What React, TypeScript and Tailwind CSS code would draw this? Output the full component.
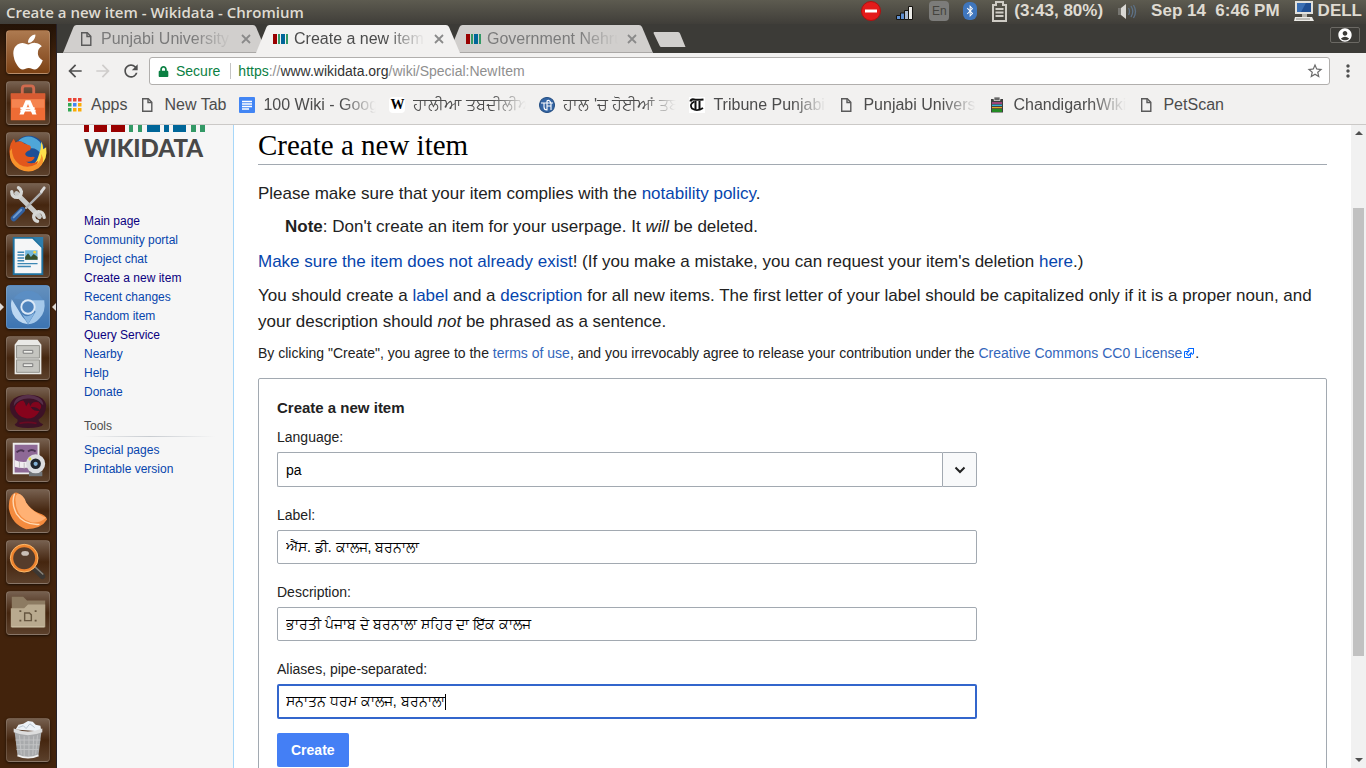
import { useState, type ReactNode } from "react";
import { FaApple, FaBluetoothB, FaLock } from "react-icons/fa";
import { MdAccountCircle, MdArrowBack, MdArrowForward, MdMoreVert, MdRefresh, MdStarBorder } from "react-icons/md";

const FADE = "[mask-image:linear-gradient(to_right,black_70%,transparent)]";

function PageIcon() {
  return (
    <svg viewBox="0 0 16 16" className="size-4 shrink-0" fill="none" stroke="#5a5a5a" strokeWidth="1.4">
      <path d="M2.7 1.7h5.6l3.5 3.500v9.100H2.700z" />
      <path d="M8 1.900v3.600h3.600" />
    </svg>
  );
}

function WikidataIcon() {
  return (
    <svg viewBox="0 0 16 16" className="size-4 shrink-0">
      <path d="M1 3h4v10H1z" fill="#990000" />
      <path d="M6 3h2v10H6zM14 3h2v10h-2z" fill="#339966" />
      <path d="M9 3h4v10H9z" fill="#006699" />
    </svg>
  );
}

interface TabProps {
  title: string;
  icon: ReactNode;
  active?: boolean;
}

function BrowserTab({ title, icon, active }: TabProps) {
  return (
    <div className={`relative -mr-[11px] h-7 w-[204px] ${active ? "z-10" : ""}`}>
      <svg viewBox="0 0 204 28" preserveAspectRatio="none" className="absolute inset-0 size-full">
        <path
          d="M0 28 L10.5 2 Q11.5 0 13.5 0 H190 Q192 0 193 2 L204 28 Z"
          fill={active ? "#f2f1f0" : "#d1cfcd"}
        />
        {!active && <path d="M0 27.5 H204" stroke="#aaa8a6" />}
      </svg>
      <div className="relative flex h-full items-center pl-4">
        <button
          role="tab"
          aria-selected={!!active}
          className={`flex items-center gap-[6px] text-base ${active ? "text-[#4c4c4c]" : "text-[#7b7b7b]"}`}
        >
          {icon}
          <span className={`w-[131px] overflow-hidden text-left whitespace-nowrap ${FADE}`}>{title}</span>
        </button>
        <button aria-label={`Close ${title}`} className="ml-2">
          <svg viewBox="0 0 12 12" className="size-3" stroke="#8a8a8a" strokeWidth="1.8">
            <path d="M2 2l8 8M10 2l-8 8" />
          </svg>
        </button>
      </div>
    </div>
  );
}

function TopBar() {
  return (
    <header className="flex h-6 shrink-0 items-center justify-between bg-linear-to-b from-[#5d5b50] to-[#403e39] pr-1 pl-[6px] text-[#dfdbd2]">
      <span className="font-['Open_Sans',sans-serif] text-[15px] leading-5 font-semibold whitespace-nowrap">
        Create a new item - Wikidata - Chromium
      </span>
      <div className="flex items-center gap-[14px] pb-[2px] text-[17px] leading-5 font-bold whitespace-nowrap">
        <svg viewBox="0 0 20 20" className="size-5">
          <circle cx="10" cy="10" r="9.5" fill="#e31b1b" stroke="#b01010" />
          <path d="M4 8.5h12v3H4z" fill="#fff" />
        </svg>
        <svg viewBox="0 0 20 20" className="size-5" stroke="#15130f">
          <path d="M1.500 14.500h4v4h-4zM5.500 12h4v6.500h-4z" fill="#5f8fd0" />
          <path d="M9.500 9.500h4v9h-4z" fill="#a9b9cf" />
          <path d="M13.500 5.500h4v13h-4z" fill="#ecece8" />
        </svg>
        <span className="flex h-5 w-5 items-center justify-center rounded-sm bg-[#7c7c7a] text-xs font-normal text-[#45443f]">
          En
        </span>
        <span className="flex h-[18px] w-[14px] items-center justify-center rounded-md bg-[#3f76bd] text-white">
          <FaBluetoothB size={12} />
        </span>
        <span className="flex items-center gap-[6px]">
          <svg viewBox="0 0 17 22" className="h-[22px] w-[17px]" fill="none" stroke="#cfccc5" strokeWidth="2">
            <path d="M2 5h3V2h7v3h3v16H2z" />
            <path d="M4.500 9h8M4.500 12.500h8M4.500 16h8" />
          </svg>
          (3:43, 80%)
        </span>
        <svg viewBox="0 0 20 20" className="size-5">
          <path d="M1 7h3v7H1z" fill="#777671" />
          <path d="M4 7l5-4v15l-5-4z" fill="#d9d8d4" />
          <path d="M11.500 7q2 3.500 0 7M14 5q3.500 5.500 0 11M16.500 4q4 6.500 0 13" fill="none" stroke="#5d7186" strokeWidth="1.300" />
        </svg>
        <span className="whitespace-pre">Sep 14  6:46 PM</span>
        <span className="flex items-center gap-1">
          <svg viewBox="0 0 20 22" className="h-[22px] w-5">
            <path d="M1 1h18v13H1z" fill="#e2e1dc" />
            <path d="M3 3h14v9H3z" fill="#1f4f94" />
            <path d="M3 3h9l-5 9H3z" fill="#3a6fb4" />
            <path d="M8 14h5v3H8z" fill="#b5b4ae" />
            <path d="M1 17h17l2 4H0z" fill="#ecebe7" />
            <path d="M2 19h14" stroke="#8f8e88" />
          </svg>
          DELL
        </span>
      </div>
    </header>
  );
}

const dockIcons: { name: string; tile?: string; icon: ReactNode }[] = [
  {
    name: "Dash",
    tile: "from-[#ad7a50] to-[#7d4213]",
    icon: <FaApple size={40} color="#fff" className="mx-auto" />,
  },
  {
    name: "Software",
    icon: (
      <svg viewBox="0 0 44 44">
        <path d="M16 14V7q0-3 3-3h6q3 0 3 3v7" fill="none" stroke="#d06a4d" strokeWidth="3" />
        <path d="M4 12h36v28H4z" fill="#ee6c35" />
        <path d="M4 12h36v6H4z" fill="#d65b32" />
        <path d="M5 18h34v9H5z" fill="#f58450" />
        <path d="M19.500 19h5L31 34h-4.500L22 23l-4.500 11H13z" fill="#fff" />
        <path d="M14 27.500h15M14 30h16" stroke="#fff" strokeWidth="2" />
      </svg>
    ),
  },
  {
    name: "Firefox",
    icon: (
      <svg viewBox="0 0 44 44">
        <circle cx="23" cy="20" r="17" fill="#1d4f96" />
        <path d="M12 8Q23-1 34 9Q39 15 35 21Q30 15 25 16Q20 10 12 8" fill="#4fa6d8" />
        <path d="M36 9Q38 13 38 17L41 15Q43 27 35 34Q28 41 18 39Q31 34 33 24Q36 17 36 9" fill="#ffdf4a" />
        <path d="M4 11L7 6L9 10Q14 7 18 11L24 13Q26 15 24 18Q20 19 19 22Q20 26 27 25Q29 25 29 26Q26 31 20 30Q26 34 33 29Q30 38 20 39Q8 38 4 28Q1 19 4 11" fill="#e2571c" />
        <path d="M5 16Q5 27 13 33Q22 38 32 32Q36 28 36 22Q41 31 33 37Q24 43 13 38Q2 31 3 19Z" fill="#f6932c" />
      </svg>
    ),
  },
  {
    name: "Settings",
    icon: (
      <svg viewBox="0 0 44 44" strokeLinecap="round">
        <path d="M10 10L34 34" stroke="#c9cac8" strokeWidth="5" />
        <path d="M5 8q0 6 6 6q4-1 4-6q-1-3-3-4M39 35q-1-6-6-6q-5 1-5 6q1 4 4 4" fill="none" stroke="#d6d7d5" strokeWidth="3.500" />
        <path d="M20 25L36 9" stroke="#aeb0b2" strokeWidth="2.500" />
        <path d="M36 8l3-4" stroke="#dadada" strokeWidth="3" />
        <path d="M7 36l9-9" stroke="#315f9f" strokeWidth="6" />
        <path d="M7 35l8-8" stroke="#6f9bd0" strokeWidth="2" />
      </svg>
    ),
  },
  {
    name: "Writer",
    icon: (
      <svg viewBox="0 0 44 44">
        <path d="M7 3h20l10 10v28H7z" fill="#f5f6f7" stroke="#1e719f" strokeWidth="2" />
        <path d="M27 2h11v12z" fill="#2e7dab" />
        <path d="M11 18h7M11 21h7M11 24h7M11 27h7M11 30h21M11 33h14" stroke="#3d88b5" strokeWidth="1.500" />
        <path d="M19 16h13v10H19z" fill="#72b8dc" />
        <path d="M19 26v-3l3-4 3 4 3-3 4 3v3z" fill="#38512c" />
        <circle cx="29" cy="18" r="1.500" fill="#f5d548" />
      </svg>
    ),
  },
  {
    name: "Chromium",
    tile: "from-[#6490bd] to-[#3c74b2]",
    icon: (
      <svg viewBox="0 0 44 44">
        <path d="M7 13Q13 5 22 5Q33 5 38 15H22z" fill="#5b8ec4" />
        <path d="M5 14L16 32Q20 36 22 40Q11 39 6 29Q3 21 5 14" fill="#bdd8f2" />
        <path d="M22 15h17Q41 27 34 34Q29 40 22 40L30 27z" fill="#a4c8ea" />
        <path d="M15 28Q18 33 24 31L29 28L22 40Q20 36 15 28" fill="#86b4e0" />
        <circle cx="22" cy="22" r="8" fill="#dce9f7" />
        <circle cx="22" cy="22" r="6" fill="#4e83bd" />
      </svg>
    ),
  },
  {
    name: "Files",
    icon: (
      <svg viewBox="0 0 44 44">
        <path d="M12 3h20l4 5v31H8V8z" fill="#e9e9e6" />
        <path d="M10 9h24v13H10zM10 24h24v13H10z" fill="#c5c5c0" stroke="#92928d" />
        <path d="M17 14h10v3H17zM17 28h10v3H17z" fill="#eeeeea" stroke="#777" />
      </svg>
    ),
  },
  {
    name: "Chat",
    icon: (
      <svg viewBox="0 0 44 44">
        <path d="M8 38Q12 36 11 33Q2 27 3 18Q6 7 22 7Q39 7 41 18Q41 28 33 33Q33 36 38 38Q36 42 22 42Q9 42 8 38" fill="#3d1226" />
        <path d="M8 21Q10 14 17 13Q19 15 20 19L23 15Q25 25 34 24Q30 32 21 32Q11 31 8 21" fill="#86031c" />
        <path d="M24 20Q26 13 33 15Q38 19 34 23Q31 19 24 20" fill="#80051d" />
        <path d="M12 10Q22 4 33 10Q38 13 38 18Q31 10 22 11Q12 11 7 19Q7 13 12 10" fill="#57304a" />
        <path d="M13 37q9-2 18 0" fill="none" stroke="#690921" strokeWidth="2" />
      </svg>
    ),
  },
  {
    name: "Cheese",
    icon: (
      <svg viewBox="0 0 44 44">
        <path d="M7 5h26v31H7z" fill="#8e6996" stroke="#ececec" strokeWidth="2" />
        <path d="M10 14q4-4 8-1M22 13q4-3 8 0" fill="none" stroke="#4c3454" strokeWidth="2" />
        <path d="M8 22q8 4 22 0v6q-12 4-22 1z" fill="#f0edf0" />
        <path d="M13 24v6M18 25v6M23 24v6" stroke="#bbb" />
        <path d="M23 34h14v5H23z" fill="#73777b" />
        <circle cx="30" cy="26" r="10" fill="#dcdde0" />
        <circle cx="30" cy="26" r="5.500" fill="#20262e" />
        <circle cx="30" cy="26" r="2.200" fill="#83b2d8" />
        <circle cx="24" cy="21" r="1.500" fill="#e4dd3b" />
      </svg>
    ),
  },
  {
    name: "Clementine",
    icon: (
      <svg viewBox="0 0 44 44">
        <path d="M8 3Q1 7 2 20Q5 36 20 41Q36 41 42 31Q41 26 33 24Q23 20 18 10Q12 1 8 3" fill="#f48b3e" />
        <path d="M11 4Q17 4 20 13Q26 23 41 29Q34 35 26 34Q10 30 9 12Q8 6 11 4" fill="#ffb174" />
        <path d="M8 4Q4 13 10 25Q18 37 34 36" fill="none" stroke="#ffd9b3" strokeWidth="1.500" />
      </svg>
    ),
  },
  {
    name: "Search",
    icon: (
      <svg viewBox="0 0 44 44">
        <path d="M28 28l9 9" stroke="#3b3733" strokeWidth="6" strokeLinecap="round" />
        <path d="M28 26l10 9" stroke="#8a857c" strokeWidth="1.500" />
        <circle cx="18" cy="18" r="13" fill="#553c2b" stroke="#ee842e" strokeWidth="3" />
        <circle cx="18" cy="18" r="14.500" fill="none" stroke="#ffbd6d" />
        <ellipse cx="19" cy="13" rx="4" ry="2.500" fill="#c9bfb6" />
      </svg>
    ),
  },
  {
    name: "Documents",
    icon: (
      <svg viewBox="0 0 44 44">
        <path d="M5 5h12l4 4h19v28H5z" fill="#8d7b62" />
        <path d="M4 17h14l4-4h18v24H4z" fill="#b9aa8f" />
        <path d="M5 36.500h34" stroke="#d1c5ad" />
        <path d="M18.500 22h5l2 2v6h-7z" fill="none" stroke="#665640" strokeWidth="1.500" />
        <path d="M13 19h2v2h-2zM29 19h2v2h-2zM13 29h2v2h-2zM29 29h2v2h-2z" fill="#665640" />
      </svg>
    ),
  },
];

function TrashIcon() {
  return (
    <svg viewBox="0 0 44 44">
      <path d="M9 11l3-5 5-1 5-3 5 1 3 3 5 1 1 6z" fill="#edf2f7" />
      <path d="M12 9l5-2 3 3 4-5 5 4" fill="none" stroke="#b7c3cf" />
      <path d="M8 14h28l-3 24q-11 5-22 0z" fill="#a8aaac" />
      <path d="M13 17l2 20M18 18v21M23 18v21M28 18l-1 20M32 17l-2 20M9 22h26M10 27h24M10 32h23" stroke="#c2c3c4" strokeWidth="1" />
      <path d="M7 10q15 6 30 0v4q-15 6-30 0z" fill="#dcdddd" />
      <path d="M11 38q11 5 22 0" fill="none" stroke="#efefef" strokeWidth="2" />
    </svg>
  );
}

const TILE = "size-11 shrink-0 rounded-[4px] border border-white/15 bg-linear-to-b shadow-sm shadow-black/50";

function Dock() {
  return (
    <nav aria-label="Launcher" className="flex w-[57px] shrink-0 flex-col gap-[7px] border-r border-[#262129] bg-linear-to-b from-[#231307] via-[#42230c] via-5% to-[#42230c] px-[6px] py-[6px]">
      {dockIcons.map((d) => (
        <button key={d.name} aria-label={d.name} className={`relative ${TILE} ${d.tile ?? "from-[#76604f] via-[#45260f] to-[#5b402b]"}`}>
          {d.icon}
          {d.name === "Chromium" && (
            <>
              <span className="absolute top-[17px] -left-[7px] border-4 border-r-0 border-transparent border-l-[#ded9d5]" />
              <span className="absolute top-[17px] -right-[7px] border-4 border-l-0 border-transparent border-r-[#ded9d5]" />
            </>
          )}
        </button>
      ))}
      <button aria-label="Trash" className={`mt-auto ${TILE} from-[#76604f] via-[#45260f] to-[#5b402b]`}>
        <TrashIcon />
      </button>
    </nav>
  );
}

const bookmarks: { title: string; icon: ReactNode }[] = [
  {
    title: "Apps",
    icon: (
      <svg viewBox="0 0 16 16" className="size-4 shrink-0">
        <path d="M1 1h3.500v3.500H1zM6 1h3.500v3.500H6zM11 1h3.500v3.500H11z" fill="#ea4335" />
        <path d="M1 6h3.500v3.500H1zM1 11h3.500v3.500H1z" fill="#34a853" />
        <path d="M6 6h3.500v3.500H6z" fill="#4285f4" />
        <path d="M11 6h3.500v3.500H11zM6 11h3.500v3.500H6zM11 11h3.500v3.500H11z" fill="#fbab05" />
      </svg>
    ),
  },
  { title: "New Tab", icon: <PageIcon /> },
  {
    title: "100 Wiki - Google Docs",
    icon: (
      <svg viewBox="0 0 16 16" className="size-4 shrink-0">
        <rect width="16" height="16" rx="1" fill="#4285f4" />
        <path d="M3 4.500h10M3 7h10M3 9.500h10M3 12h7" stroke="#fff" strokeWidth="1.300" />
      </svg>
    ),
  },
  {
    title: "ਹਾਲੀਆ ਤਬਦੀਲੀਆਂ",
    icon: (
      <span className="flex size-4 shrink-0 items-center justify-center rounded-sm bg-white font-['Liberation_Serif',serif] text-sm leading-4 font-bold text-black">
        W
      </span>
    ),
  },
  {
    title: "ਹਾਲ 'ਚ ਹੋਈਆਂ ਤਬਦੀਲੀਆਂ",
    icon: (
      <svg viewBox="0 0 16 16" className="size-4 shrink-0" fill="none" stroke="#fff" strokeWidth="1.100">
        <circle cx="8" cy="8" r="7.500" fill="#3465a4" stroke="#2b5487" />
        <path d="M2 6h12M5 6v4q0 3 3 3V4q2-2 4 2v7M8 9h4" />
      </svg>
    ),
  },
  {
    title: "Tribune Punjabi",
    icon: (
      <svg viewBox="0 0 16 16" className="size-4 shrink-0" fill="none" stroke="#111">
        <path d="M0 0h16v16H0z" fill="#fff" stroke="none" />
        <path d="M1.500 4.500Q2 2 5 2.500t9.500 0" strokeWidth="2.200" />
        <path d="M5.500 4.500Q0 7 3 11.500Q8 15 14 11" strokeWidth="1.800" />
        <path d="M6.500 4v8M10.500 4v8.500" strokeWidth="2" />
      </svg>
    ),
  },
  { title: "Punjabi University", icon: <PageIcon /> },
  {
    title: "ChandigarhWikipedia",
    icon: (
      <svg viewBox="0 0 16 16" className="size-4 shrink-0">
        <path d="M2 2h12v13.500H2z" fill="#3d3d3d" />
        <path d="M5 0h6v3.500H5z" fill="#666" stroke="#f2f1f0" strokeWidth=".7" />
        <path d="M3 6h10" stroke="#d64a9a" strokeWidth="1.300" />
        <path d="M3 8.300h10" stroke="#39b7de" strokeWidth="1.300" />
        <path d="M3 10.600h10" stroke="#e2a729" strokeWidth="1.300" />
        <path d="M3 12h10v3H3z" fill="#248c24" />
      </svg>
    ),
  },
  { title: "PetScan", icon: <PageIcon /> },
];

const shortTitles = ["Apps", "New Tab", "PetScan"];

function BrowserChrome() {
  return (
    <div className="shrink-0">
      <div className="flex h-[29px] items-start bg-[#3c3b37] px-[6px] pt-px" role="tablist">
        <BrowserTab title="Punjabi University Patiala" icon={<PageIcon />} />
        <BrowserTab title="Create a new item - Wikidata" icon={<WikidataIcon />} active />
        <BrowserTab title="Government Nehru Memorial" icon={<WikidataIcon />} />
        <button aria-label="New tab" className="mt-[7px] ml-[11px]">
          <svg viewBox="0 0 33 15" className="h-[15px] w-[33px]">
            <path d="M1 0h24q1.500 0 2 1.500L32.500 15H8.500Q7 15 6.500 13.500L.5 1Z" fill="#d1cfcd" />
          </svg>
        </button>
        <button aria-label="Profile" className="mt-[2px] ml-auto flex h-4 w-[30px] items-center justify-center rounded-xs border border-[#6b6964] text-white">
          <MdAccountCircle size={16} />
        </button>
      </div>
      <div className="flex h-9 items-center bg-[#f2f1f0] px-2 text-[#4f4f4f]">
        <button aria-label="Back" className="mr-2"><MdArrowBack size={20} /></button>
        <button aria-label="Forward" className="mr-2 text-[#cfcdcb]"><MdArrowForward size={20} /></button>
        <button aria-label="Reload" className="mr-2"><MdRefresh size={20} /></button>
        <div className="flex h-7 flex-1 items-center rounded-[3px] border border-[#b1afad] bg-white pr-[5px] pl-2 text-sm">
          <FaLock size={11} color="#0b8043" />
          <span className="ml-[7px] border-r border-[#c4c4c4] pr-[10px] leading-4 text-[#0b8043]">Secure</span>
          <span className="ml-[7px] flex-1 whitespace-nowrap text-[#8f8f8f]">
            <span className="text-[#0b8043]">https</span>://<span className="text-[#333]">www.wikidata.org</span>/wiki/Special:NewItem
          </span>
          <button aria-label="Bookmark this page"><MdStarBorder size={18} color="#6a6a6a" /></button>
        </div>
        <button aria-label="Menu" className="ml-2"><MdMoreVert size={20} /></button>
      </div>
      <div className="flex h-9 items-center gap-[13px] overflow-hidden border-b border-[#cbc9c7] bg-[#f2f1f0] pb-1 pl-[10px] text-base text-[#4c4c4c]">
        {bookmarks.map((b) => (
          <a key={b.title} href="#" className="flex items-center gap-2">
            {b.icon}
            <span className={shortTitles.includes(b.title) ? "whitespace-nowrap" : `w-[113px] overflow-hidden whitespace-nowrap ${FADE}`}>
              {b.title}
            </span>
          </a>
        ))}
      </div>
    </div>
  );
}

const navLinks = [
  { text: "Main page", visited: true },
  { text: "Community portal" },
  { text: "Project chat" },
  { text: "Create a new item", visited: true },
  { text: "Recent changes" },
  { text: "Random item" },
  { text: "Query Service", visited: true },
  { text: "Nearby" },
  { text: "Help" },
  { text: "Donate" },
];

function Sidebar() {
  return (
    <aside className="w-[177px] shrink-0 border-r border-[#a7d7f9] bg-[#f6f6f6] pr-[18px] pl-[27px] text-xs leading-[19px] text-[#0645ad]">
      <a href="#" aria-label="Wikidata" className="block h-[87px] text-[#484848]">
        <svg viewBox="0 0 121 7" className="h-[7px] w-[121px]">
          <path d="M0 0h5v7H0zM10 0h13v7H10zM27 0h14v7H27z" fill="#990000" />
          <path d="M45 0h4v7h-4zM54 0h4v7h-4zM107 0h5v7h-5zM116 0h5v7h-5z" fill="#339966" />
          <path d="M63 0h13v7H63zM80 0h5v7h-5zM89 0h13v7H89z" fill="#006699" />
        </svg>
        <span className="mt-1 block font-[Lato,sans-serif] text-2xl leading-6 font-black">WIKIDATA</span>
      </a>
      <ul>
        {navLinks.map((l) => (
          <li key={l.text}>
            <a href="#" className={l.visited ? "text-[#0b0080]" : ""}>{l.text}</a>
          </li>
        ))}
      </ul>
      <h3 className="mt-[15px] text-[#4d4d4d]">Tools</h3>
      <div className="mb-1 h-px bg-linear-to-r from-transparent via-[#c8ccd1] to-transparent" />
      <ul>
        <li><a href="#">Special pages</a></li>
        <li><a href="#">Printable version</a></li>
      </ul>
    </aside>
  );
}

const INPUT = "w-full rounded-[2px] border border-[#a2a9b1] bg-white px-2 text-sm text-black outline-none";

function ItemForm() {
  const [values, setValues] = useState({
    language: "pa",
    label: "ਐੱਸ. ਡੀ. ਕਾਲਜ, ਬਰਨਾਲਾ",
    description: "ਭਾਰਤੀ ਪੰਜਾਬ ਦੇ ਬਰਨਾਲਾ ਸ਼ਹਿਰ ਦਾ ਇੱਕ ਕਾਲਜ",
    aliases: "ਸਨਾਤਨ ਧਰਮ ਕਾਲਜ, ਬਰਨਾਲਾ",
  });
  const set = (key: string, value: string) => setValues({ ...values, [key]: value });

  return (
    <form className="mt-[14px] rounded-[2px] border border-[#a2a9b1] px-[18px] pt-[19px] pb-6" onSubmit={(e) => e.preventDefault()}>
      <h2 className="mb-[9px] text-[15px] leading-5 font-bold">Create a new item</h2>
      <div className="max-w-[700px] text-sm leading-5">
        <label htmlFor="language" className="mb-[5px] block">Language:</label>
        <div className="mb-[18px] flex h-[35px]">
          <input id="language" className={`${INPUT} rounded-r-none border-r-0`} value={values.language} onChange={(e) => set("language", e.target.value)} />
          <button type="button" aria-label="Show languages" className="flex w-[35px] shrink-0 items-center justify-center rounded-r-[2px] border border-[#a2a9b1] bg-[#f8f9fa]">
            <svg viewBox="0 0 12 8" className="h-2 w-3" fill="none" stroke="#222" strokeWidth="2">
              <path d="M1.500 1.500l4.500 4.500 4.500-4.500" />
            </svg>
          </button>
        </div>
        <label htmlFor="label" className="mb-[5px] block">Label:</label>
        <input id="label" className={`${INPUT} mb-[18px] block h-[34px]`} value={values.label} onChange={(e) => set("label", e.target.value)} />
        <label htmlFor="description" className="mb-[5px] block">Description:</label>
        <input id="description" className={`${INPUT} mb-[18px] block h-[34px]`} value={values.description} onChange={(e) => set("description", e.target.value)} />
        <label htmlFor="aliases" className="mb-[5px] block">Aliases, pipe-separated:</label>
        <div className="relative mb-[14px]">
          <input
            id="aliases"
            className="block h-[35px] w-full rounded-[2px] border-2 border-[#3366cc] bg-white px-[7px] text-sm text-black outline-none"
            value={values.aliases}
            onChange={(e) => set("aliases", e.target.value)}
          />
          <span className="absolute top-[10px] left-[168px] h-4 w-px bg-black" />
        </div>
        <button type="submit" className="h-[34px] rounded-[2px] bg-[#447ff5] px-[14px] font-bold text-white">Create</button>
      </div>
    </form>
  );
}

function Link({ children }: { children: ReactNode }) {
  return <a href="#" className="text-[#0645ad]">{children}</a>;
}

function ExternalIcon() {
  return (
    <svg viewBox="0 0 12 12" className="mb-[2px] ml-px inline size-3">
      <path fill="#fff" stroke="#06f" d="M1.500 4.518h5.982V10.500H1.500z" />
      <path fill="#06f" d="M5.765 1H11v5.390L9.427 7.937l-1.310-1.310L5.393 9.350l-2.690-2.688 2.810-2.808L4.200 2.544z" />
      <path fill="#fff" d="m9.995 2.004.022 4.885L8.200 5.070 5.320 7.950 4.090 6.723l2.882-2.880-1.850-1.852z" />
    </svg>
  );
}

function Content() {
  return (
    <main className="min-w-0 flex-1 px-6 pt-[3px] text-[17px] leading-[26px] text-[#222]">
      <h1 className="border-b border-[#a2a9b1] pb-[2px] font-['Liberation_Serif',serif] text-[29px] leading-[34px] text-black">
        Create a new item
      </h1>
      <p className="mt-4">Please make sure that your item complies with the <Link>notability policy</Link>.</p>
      <p className="mt-[7px] pl-[27px]"><b>Note</b>: Don't create an item for your userpage. It <i>will</i> be deleted.</p>
      <p className="mt-[9px]">
        <Link>Make sure the item does not already exist</Link>! (If you make a mistake, you can request your item's deletion <Link>here</Link>.)
      </p>
      <p className="mt-2">
        You should create a <Link>label</Link> and a <Link>description</Link> for all new items. The first letter of your label should be capitalized only if it is a proper noun, and your description should <i>not</i> be phrased as a sentence.
      </p>
      <p className="mt-[7px] text-sm leading-[22px]">
        By clicking "Create", you agree to the <a href="#" className="text-[#36b]">terms of use</a>, and you irrevocably agree to release your contribution under the{" "}
        <a href="#" className="text-[#36b]">Creative Commons CC0 License<ExternalIcon /></a>.
      </p>
      <ItemForm />
    </main>
  );
}

function Scrollbar() {
  return (
    <div className="flex w-[15px] shrink-0 flex-col items-center bg-[#f1f1f1] py-[6px]" aria-hidden="true">
      <span className="border-4 border-t-0 border-transparent border-b-[#505050]" />
      <span className="mt-[73px] w-[11px] basis-[448px] bg-[#c1c1c1]" />
      <span className="mt-auto border-4 border-b-0 border-transparent border-t-[#505050]" />
    </div>
  );
}

export default function App() {
  return (
    <div className="flex h-screen flex-col overflow-hidden bg-white font-['Liberation_Sans','Noto_Sans',sans-serif]">
      <TopBar />
      <div className="flex min-h-0 flex-1">
        <Dock />
        <div className="flex min-w-0 flex-1 flex-col">
          <BrowserChrome />
          <div className="flex min-h-0 flex-1 overflow-hidden">
            <Sidebar />
            <Content />
            <Scrollbar />
          </div>
        </div>
      </div>
    </div>
  );
}
